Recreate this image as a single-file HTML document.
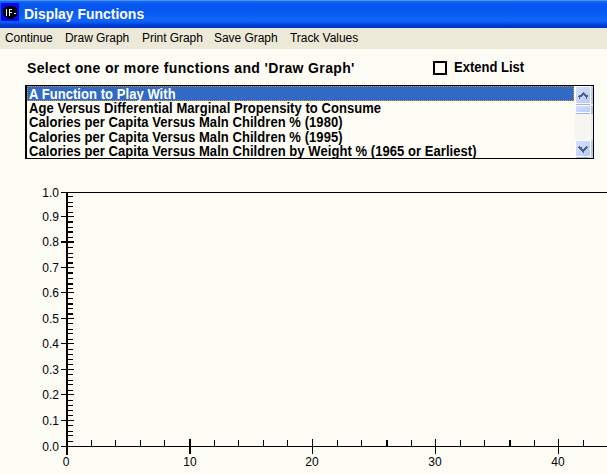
<!DOCTYPE html>
<html><head><meta charset="utf-8">
<style>
*{margin:0;padding:0;box-sizing:border-box}
html,body{width:607px;height:474px;overflow:hidden;background:#FDFDF6;font-family:"Liberation Sans",sans-serif;position:relative}
.a{position:absolute;white-space:nowrap}
#title{left:0;top:0;width:607px;height:28px;background:linear-gradient(#4a94fb 0px,#4a94fb 1px,#1a6af5 1px,#0a5cf2 3px,#0556f0 7px,#0858f2 12px,#0e62f6 17px,#0f64f7 21px,#0654ec 23px,#003ed0 25px,#0034c0 28px)}
#ttext{left:24px;top:4.6px;font-size:15px;font-weight:bold;color:#fff;line-height:18px;transform:scaleX(0.93);transform-origin:0 0}
#menu{left:0;top:28px;width:607px;height:21px;background:#ECE9D8}
.m{top:30.5px;font-size:12px;letter-spacing:-0.05px;line-height:14px;color:#000}
.lb{font-weight:bold;color:#000}
#list{left:25px;top:85px;width:569px;height:74px;border:1px solid #000;border-left-width:2px;background:#FDFDF6}
.row{left:29px;font-size:13px;letter-spacing:0.06px;font-weight:bold;line-height:14px;color:#000;transform:scaleY(1.08);transform-origin:0 2px}
#sel{left:27px;top:86px;width:547px;height:15px;background:#316AC5;outline:1px dotted #CE953A;outline-offset:-1px}
.t{position:absolute;background:#000}
.xl{position:absolute;font-size:12px;line-height:12px;color:#000;white-space:nowrap}
</style></head><body>
<div id="title" class="a"></div>
<svg class="a" style="left:1px;top:3px" width="18" height="18" viewBox="0 0 18 18" shape-rendering="crispEdges">
<rect x="0" y="0" width="18" height="18" fill="#0808f2"/>
<path d="M6 3h7v1h2v1h1v8h-1v1h-2v2h-7v-2h-2v-1h-2v-8h2v-1h2z" fill="#000"/>
<rect x="5" y="6" width="1" height="7" fill="#fff"/>
<rect x="8" y="6" width="1" height="7" fill="#fff"/>
<rect x="8" y="6" width="3" height="1" fill="#fff"/>
<rect x="8" y="9" width="3" height="1" fill="#fff"/>
<rect x="13" y="10" width="2" height="1" fill="#fff"/>
</svg>
<div id="ttext" class="a">Display Functions</div>
<div id="menu" class="a"></div>
<div class="a m" style="left:5px">Continue</div>
<div class="a m" style="left:65px">Draw Graph</div>
<div class="a m" style="left:142px">Print Graph</div>
<div class="a m" style="left:214px">Save Graph</div>
<div class="a m" style="left:290px">Track Values</div>

<div class="a lb" style="left:27px;top:59.6px;font-size:14px;letter-spacing:0.36px;line-height:16px">Select one or more functions and 'Draw Graph'</div>
<div class="a" style="left:433px;top:61px;width:14px;height:14px;border:2px solid #000"></div>
<div class="a lb" style="left:454px;top:59px;font-size:13px;line-height:16px;transform:scaleY(1.08);transform-origin:0 3px">Extend List</div>

<div id="list" class="a"></div>
<div id="sel" class="a"></div>
<div class="a row" style="top:87px;color:#fff">A Function to Play With</div>
<div class="a row" style="top:101px">Age Versus Differential Marginal Propensity to Consume</div>
<div class="a row" style="top:115px">Calories per Capita Versus Maln Children % (1980)</div>
<div class="a row" style="top:130px">Calories per Capita Versus Maln Children % (1995)</div>
<div class="a row" style="top:144px">Calories per Capita Versus Maln Children by Weight % (1965 or Earliest)</div>

<!-- scrollbar -->
<svg class="a" style="left:574px;top:86px" width="19" height="72" viewBox="0 0 19 72" shape-rendering="crispEdges">
<defs><linearGradient id="bg1" x1="0" y1="0" x2="1" y2="1"><stop offset="0" stop-color="#D6E1FD"/><stop offset="1" stop-color="#B7CBF7"/></linearGradient></defs><rect x="0" y="0" width="19" height="72" fill="#F6F5EF"/>
<rect x="0" y="0" width="1" height="72" fill="#FBFBF8"/>
<rect x="17" y="0" width="2" height="72" fill="#E9ECF2"/>
<!-- up button -->
<rect x="1" y="0" width="16" height="18" fill="#FFFFFF"/>
<rect x="2" y="1" width="14" height="16" fill="url(#bg1)"/>
<rect x="2" y="18" width="14" height="1" fill="#9DB4E6"/>
<rect x="17" y="0" width="2" height="18" fill="#BAC8EA"/>
<rect x="9" y="6" width="1" height="1" fill="#4D6185"/><rect x="8" y="7" width="3" height="1" fill="#4D6185"/><rect x="7" y="8" width="5" height="1" fill="#4D6185"/><rect x="5" y="9" width="4" height="1" fill="#4D6185"/><rect x="10" y="9" width="4" height="1" fill="#4D6185"/><rect x="4" y="10" width="4" height="1" fill="#4D6185"/><rect x="11" y="10" width="3" height="1" fill="#4D6185"/><rect x="5" y="11" width="1" height="1" fill="#4D6185"/><rect x="12" y="11" width="1" height="1" fill="#4D6185"/><rect x="5" y="12" width="1" height="1" fill="#4D6185"/><rect x="12" y="12" width="1" height="1" fill="#4D6185"/>
<!-- thumb -->
<rect x="1" y="19" width="16" height="8" fill="#FFFFFF"/>
<rect x="2" y="20" width="14" height="6" fill="url(#bg1)"/>
<rect x="2" y="27" width="14" height="1" fill="#9DB4E6"/>
<rect x="17" y="20" width="2" height="8" fill="#B0BFE4"/>
<!-- down button -->
<rect x="1" y="54" width="16" height="17" fill="#FFFFFF"/>
<rect x="2" y="55" width="14" height="15" fill="url(#bg1)"/>
<rect x="2" y="71" width="14" height="1" fill="#9DB4E6"/>
<rect x="17" y="54" width="2" height="18" fill="#BAC8EA"/>
<rect x="5" y="60" width="1" height="1" fill="#4D6185"/><rect x="12" y="60" width="1" height="1" fill="#4D6185"/><rect x="4" y="61" width="4" height="1" fill="#4D6185"/><rect x="11" y="61" width="3" height="1" fill="#4D6185"/><rect x="5" y="62" width="3" height="1" fill="#4D6185"/><rect x="10" y="62" width="3" height="1" fill="#4D6185"/><rect x="6" y="63" width="6" height="1" fill="#4D6185"/><rect x="7" y="64" width="4" height="1" fill="#4D6185"/><rect x="8" y="65" width="2" height="1" fill="#4D6185"/><rect x="9" y="66" width="1" height="1" fill="#4D6185"/>
</svg>

<div class="t" style="left:61px;top:192px;width:546px;height:1px"></div>
<div class="t" style="left:61px;top:446px;width:546px;height:1px"></div>
<div class="t" style="left:66px;top:192px;width:2px;height:263px"></div>
<div class="t" style="left:61px;top:446px;width:13px;height:1px"></div>
<div class="t" style="left:61px;top:420px;width:13px;height:1px"></div>
<div class="t" style="left:61px;top:394px;width:13px;height:1px"></div>
<div class="t" style="left:61px;top:369px;width:13px;height:1px"></div>
<div class="t" style="left:61px;top:343px;width:13px;height:1px"></div>
<div class="t" style="left:61px;top:318px;width:13px;height:1px"></div>
<div class="t" style="left:61px;top:292px;width:13px;height:1px"></div>
<div class="t" style="left:61px;top:267px;width:13px;height:1px"></div>
<div class="t" style="left:61px;top:241px;width:13px;height:2px"></div>
<div class="t" style="left:61px;top:216px;width:13px;height:1px"></div>
<div class="t" style="left:61px;top:192px;width:13px;height:1px"></div>
<div class="t" style="left:68px;top:196px;width:5px;height:1px"></div>
<div class="t" style="left:68px;top:202px;width:5px;height:1px"></div>
<div class="t" style="left:68px;top:206px;width:5px;height:1px"></div>
<div class="t" style="left:68px;top:212px;width:5px;height:1px"></div>
<div class="t" style="left:68px;top:221px;width:5px;height:2px"></div>
<div class="t" style="left:68px;top:227px;width:5px;height:1px"></div>
<div class="t" style="left:68px;top:231px;width:5px;height:2px"></div>
<div class="t" style="left:68px;top:237px;width:5px;height:1px"></div>
<div class="t" style="left:68px;top:247px;width:5px;height:1px"></div>
<div class="t" style="left:68px;top:253px;width:5px;height:1px"></div>
<div class="t" style="left:68px;top:257px;width:5px;height:1px"></div>
<div class="t" style="left:68px;top:262px;width:5px;height:2px"></div>
<div class="t" style="left:68px;top:272px;width:5px;height:2px"></div>
<div class="t" style="left:68px;top:278px;width:5px;height:1px"></div>
<div class="t" style="left:68px;top:283px;width:5px;height:2px"></div>
<div class="t" style="left:68px;top:288px;width:5px;height:1px"></div>
<div class="t" style="left:68px;top:298px;width:5px;height:1px"></div>
<div class="t" style="left:68px;top:303px;width:5px;height:2px"></div>
<div class="t" style="left:68px;top:308px;width:5px;height:1px"></div>
<div class="t" style="left:68px;top:313px;width:5px;height:2px"></div>
<div class="t" style="left:68px;top:323px;width:5px;height:1px"></div>
<div class="t" style="left:68px;top:329px;width:5px;height:1px"></div>
<div class="t" style="left:68px;top:333px;width:5px;height:1px"></div>
<div class="t" style="left:68px;top:339px;width:5px;height:1px"></div>
<div class="t" style="left:68px;top:349px;width:5px;height:1px"></div>
<div class="t" style="left:68px;top:354px;width:5px;height:1px"></div>
<div class="t" style="left:68px;top:359px;width:5px;height:1px"></div>
<div class="t" style="left:68px;top:364px;width:5px;height:1px"></div>
<div class="t" style="left:68px;top:374px;width:5px;height:1px"></div>
<div class="t" style="left:68px;top:380px;width:5px;height:1px"></div>
<div class="t" style="left:68px;top:384px;width:5px;height:1px"></div>
<div class="t" style="left:68px;top:390px;width:5px;height:1px"></div>
<div class="t" style="left:68px;top:400px;width:5px;height:1px"></div>
<div class="t" style="left:68px;top:405px;width:5px;height:1px"></div>
<div class="t" style="left:68px;top:410px;width:5px;height:1px"></div>
<div class="t" style="left:68px;top:415px;width:5px;height:1px"></div>
<div class="t" style="left:68px;top:425px;width:5px;height:1px"></div>
<div class="t" style="left:68px;top:431px;width:5px;height:1px"></div>
<div class="t" style="left:68px;top:435px;width:5px;height:1px"></div>
<div class="t" style="left:68px;top:441px;width:5px;height:1px"></div>
<div class="t" style="left:91px;top:440px;width:1px;height:6px"></div>
<div class="t" style="left:115px;top:440px;width:1px;height:6px"></div>
<div class="t" style="left:140px;top:440px;width:1px;height:6px"></div>
<div class="t" style="left:164px;top:440px;width:1px;height:6px"></div>
<div class="t" style="left:214px;top:440px;width:1px;height:6px"></div>
<div class="t" style="left:238px;top:440px;width:1px;height:6px"></div>
<div class="t" style="left:263px;top:440px;width:1px;height:6px"></div>
<div class="t" style="left:287px;top:440px;width:1px;height:6px"></div>
<div class="t" style="left:337px;top:440px;width:1px;height:6px"></div>
<div class="t" style="left:361px;top:440px;width:1px;height:6px"></div>
<div class="t" style="left:386px;top:440px;width:2px;height:6px"></div>
<div class="t" style="left:411px;top:440px;width:1px;height:6px"></div>
<div class="t" style="left:460px;top:440px;width:1px;height:6px"></div>
<div class="t" style="left:484px;top:440px;width:1px;height:6px"></div>
<div class="t" style="left:509px;top:440px;width:2px;height:6px"></div>
<div class="t" style="left:534px;top:440px;width:1px;height:6px"></div>
<div class="t" style="left:583px;top:440px;width:1px;height:6px"></div>
<div class="t" style="left:189px;top:439px;width:2px;height:15px"></div>
<div class="t" style="left:312px;top:439px;width:1px;height:15px"></div>
<div class="t" style="left:435px;top:439px;width:1px;height:15px"></div>
<div class="t" style="left:558px;top:439px;width:1px;height:15px"></div>
<div class="xl" style="right:548px;top:441px">0.0</div>
<div class="xl" style="right:548px;top:415px">0.1</div>
<div class="xl" style="right:548px;top:389px">0.2</div>
<div class="xl" style="right:548px;top:364px">0.3</div>
<div class="xl" style="right:548px;top:338px">0.4</div>
<div class="xl" style="right:548px;top:313px">0.5</div>
<div class="xl" style="right:548px;top:287px">0.6</div>
<div class="xl" style="right:548px;top:262px">0.7</div>
<div class="xl" style="right:548px;top:236px">0.8</div>
<div class="xl" style="right:548px;top:211px">0.9</div>
<div class="xl" style="right:548px;top:187px">1.0</div>
<div class="xl" style="left:46px;width:40px;text-align:center;top:455.6px">0</div>
<div class="xl" style="left:170px;width:40px;text-align:center;top:455.6px">10</div>
<div class="xl" style="left:292px;width:40px;text-align:center;top:455.6px">20</div>
<div class="xl" style="left:415px;width:40px;text-align:center;top:455.6px">30</div>
<div class="xl" style="left:538px;width:40px;text-align:center;top:455.6px">40</div>
</body></html>
